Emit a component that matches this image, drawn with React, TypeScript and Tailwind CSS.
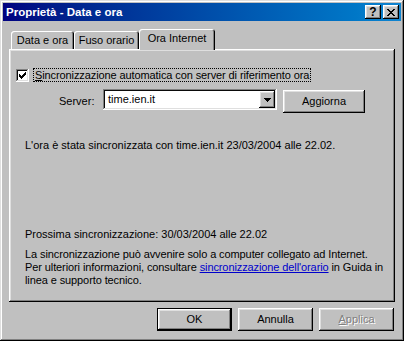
import * as React from 'react';

// Classic Win9x 3D edges, written out in full so Tailwind picks them up.
const raised =
  'shadow-[inset_-1px_-1px_#000,inset_1px_1px_#fff,inset_-2px_-2px_#808080,inset_2px_2px_#dfdfdf]';
const sunken =
  'shadow-[inset_-1px_-1px_#fff,inset_1px_1px_#808080,inset_-2px_-2px_#dfdfdf,inset_2px_2px_#0a0a0a]';

const CHECK = ['......#', '.....##', '#...###', '##.###.', '#####..', '.###...', '..#....'];

function CheckMark() {
  return (
    <svg width="7" height="7" viewBox="0 0 7 7" shapeRendering="crispEdges">
      {CHECK.flatMap((row, y) =>
        row.split('').map((c, x) => (c === '#' ? <rect key={`${x}-${y}`} x={x} y={y} width="1" height="1" fill="#000" /> : null)),
      )}
    </svg>
  );
}

function CaptionButton({ children }: { children: React.ReactNode }) {
  return (
    <div className={`flex h-[14px] w-4 items-center justify-center bg-[#c0c0c0] ${raised}`}>{children}</div>
  );
}

function Button({
  children,
  width = 'w-[75px]',
  isDefault = false,
  disabled = false,
}: {
  children: React.ReactNode;
  width?: string;
  isDefault?: boolean;
  disabled?: boolean;
}) {
  return (
    <div
      className={`flex h-[23px] items-center justify-center bg-[#c0c0c0] ${width} ${
        isDefault
          ? 'shadow-[inset_-1px_-1px_#000,inset_1px_1px_#000,inset_-2px_-2px_#000,inset_2px_2px_#fff,inset_-3px_-3px_#808080,inset_3px_3px_#dfdfdf]'
          : raised
      } ${disabled ? 'text-[#808080] [text-shadow:1px_1px_#fff]' : 'text-black'}`}
    >
      {children}
    </div>
  );
}

function Tab({ label, width, selected = false }: { label: string; width: string; selected?: boolean }) {
  return (
    <div
      className={`flex items-center justify-center rounded-t-[3px] bg-[#c0c0c0] ${width} ${
        selected
          ? 'h-[21px] pb-[2px] shadow-[inset_1px_1px_#fff,inset_-1px_0_#000,inset_-2px_0_#808080]'
          : 'mb-[1px] h-[18px] shadow-[inset_1px_1px_#fff,inset_-1px_0_#000,inset_-2px_0_#808080]'
      }`}
    >
      {label}
    </div>
  );
}

export default function App() {
  return (
    <div
      className="flex h-[341px] w-[404px] flex-col bg-[#c0c0c0] p-[3px] font-['Liberation_Sans',Arial,sans-serif] text-[11px] leading-[13px] text-black shadow-[inset_-1px_-1px_#000,inset_1px_1px_#dfdfdf,inset_-2px_-2px_#808080,inset_2px_2px_#fff]"
    >
      {/* title bar */}
      <div className="flex h-[18px] items-center bg-linear-to-r from-[#000080] to-[#1084d0] pl-[3px] pr-[2px]">
        <span className="flex-1 text-[11.5px] font-bold text-white">Proprietà - Data e ora</span>
        <div className="flex gap-[2px]">
          <CaptionButton>
            <span className="text-[12px] font-bold leading-none">?</span>
          </CaptionButton>
          <CaptionButton>
            <svg width="8" height="7" viewBox="0 0 8 7" shapeRendering="crispEdges">
              <path d="M0 0h2v1h-2zM6 0h2v1h-2zM1 1h2v1h-2zM5 1h2v1h-2zM2 2h4v1h-4zM3 3h2v1h-2zM2 4h4v1h-4zM1 5h2v1h-2zM5 5h2v1h-2zM0 6h2v1h-2zM6 6h2v1h-2z" fill="#000" />
            </svg>
          </CaptionButton>
        </div>
      </div>

      {/* body */}
      <div className="flex flex-1 flex-col px-[6px] pt-[8px]">
        <div className="relative z-10 -mb-px flex h-[21px] items-end pl-[2px]">
          <Tab label="Data e ora" width="w-[63px]" />
          <Tab label="Fuso orario" width="w-[65px]" />
          <Tab label="Ora Internet" width="w-[76px]" selected />
        </div>

        <div className={`flex h-[253px] flex-col bg-[#c0c0c0] pt-[19px] ${raised}`}>
          <div className="flex items-center pl-[7px]">
            <div className={`flex h-[13px] w-[13px] items-center justify-center bg-white ${sunken}`}>
              <CheckMark />
            </div>
            <div className="ml-[4px] flex h-[14px] items-center whitespace-nowrap border border-dotted border-black px-px tracking-[-0.1px]">
              <span>
                <span className="underline">S</span>incronizzazione automatica con server di riferimento ora
              </span>
            </div>
          </div>

          <div className="mt-[7px] flex items-start pl-[50px]">
            <span className="mt-[6px] w-[44px]">Server:</span>
            <div className={`flex h-[21px] w-[174px] items-center bg-white p-[2px] ${sunken}`}>
              <span className="flex-1 pl-[3px]">time.ien.it</span>
              <div className={`flex h-[17px] w-4 items-center justify-center bg-[#c0c0c0] ${raised}`}>
                <svg width="7" height="4" viewBox="0 0 7 4" shapeRendering="crispEdges">
                  <path d="M0 0h7v1h-7zM1 1h5v1h-5zM2 2h3v1h-3zM3 3h1v1h-1z" fill="#000" />
                </svg>
              </div>
            </div>
            <div className="ml-[6px] mt-px">
              <Button width="w-[82px]">Aggiorna</Button>
            </div>
          </div>

          <p className="mt-[26px] whitespace-nowrap pl-[16px]">
            L'ora è stata sincronizzata con time.ien.it 23/03/2004 alle 22.02.
          </p>

          <p className="mt-[76px] whitespace-nowrap pl-[16px]">Prossima sincronizzazione: 30/03/2004 alle 22.02</p>

          <p className="mt-[7px] whitespace-nowrap pl-[16px] tracking-[-0.1px]">
            La sincronizzazione può avvenire solo a computer collegato ad Internet.
            <br />
            Per ulteriori informazioni, consultare{' '}
            <span className="text-[#0000cc] underline">sincronizzazione dell'orario</span> in Guida in
            <br />
            linea e supporto tecnico.
          </p>
        </div>

        <div className="mt-[6px] flex justify-end gap-[6px] pr-px">
          <Button isDefault>OK</Button>
          <Button>Annulla</Button>
          <Button disabled>
            <span>
              <span className="underline">A</span>pplica
            </span>
          </Button>
        </div>
      </div>
    </div>
  );
}
